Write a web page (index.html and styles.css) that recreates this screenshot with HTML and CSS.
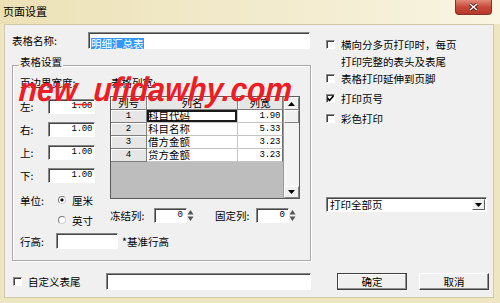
FILE: index.html
```html
<!DOCTYPE html>
<html>
<head>
<meta charset="utf-8">
<link rel="stylesheet" href="styles.css">
</head>
<body>
<div class="window">
  <div class="titlebar">
    <span class="title">页面设置</span>
    <span class="close"><svg width="9" height="8" viewBox="0 0 9 8"><path d="M1 1 L8 7 M8 1 L1 7" stroke="#3a1410" stroke-width="3"/><path d="M1 1 L8 7 M8 1 L1 7" stroke="#fff" stroke-width="1.6"/></svg></span>
  </div>
  <div class="client">
    <div class="main">
      <div class="left">
        <div class="name-row">
          <span class="name-lbl">表格名称:</span>
          <div class="field name-field"><span class="sel">明细汇总表</span></div>
        </div>
        <div class="group">
          <div class="group-title">表格设置</div>
          <div class="group-body">
            <div class="gb-top">
              <div class="margins">
                <div class="cap">页边界宽度:</div>
                <div class="mrow"><span class="mlbl">左:</span><div class="field num">1.00</div></div>
                <div class="mrow"><span class="mlbl">右:</span><div class="field num">1.00</div></div>
                <div class="mrow"><span class="mlbl">上:</span><div class="field num">1.00</div></div>
                <div class="mrow"><span class="mlbl">下:</span><div class="field num">1.00</div></div>
                <div class="unit-row"><span class="ulbl">单位:</span><span class="radio on"></span><span>厘米</span></div>
                <div class="unit-row second"><span class="radio"></span><span>英寸</span></div>
              </div>
              <div class="colarea">
                <div class="cap cap2">表格列宽:</div>
                <div class="grid">
                  <div class="gtable">
                    <div class="hc">列号</div><div class="hc">列名</div><div class="hc">列宽</div>
                    <div class="rc">1</div><div class="dc focus">科目代码</div><div class="dc n">1.90</div>
                    <div class="rc">2</div><div class="dc">科目名称</div><div class="dc n">5.33</div>
                    <div class="rc">3</div><div class="dc">借方金额</div><div class="dc n">3.23</div>
                    <div class="rc">4</div><div class="dc">贷方金额</div><div class="dc n">3.23</div>
                  </div>
                  <div class="gscroll">
                    <div class="sbtn"><svg width="7" height="4" viewBox="0 0 7 4"><path d="M0 4 L3.5 0 L7 4 Z" fill="#000"/></svg></div>
                    <div class="thumb"></div>
                    <div class="track"></div>
                    <div class="sbtn down"><svg width="7" height="4" viewBox="0 0 7 4"><path d="M0 0 L7 0 L3.5 4 Z" fill="#000"/></svg></div>
                  </div>
                </div>
                <div class="spins">
                  <span class="slbl">冻结列:</span>
                  <div class="spin">
                    <div class="field spin-box">0</div>
                    <div class="spin-btn"><svg width="7" height="13" viewBox="0 0 7 13"><path d="M0.5 5.5 L3.5 1 L6.5 5.5 Z M0.5 7.5 L6.5 7.5 L3.5 12 Z" fill="#555"/></svg></div>
                  </div>
                  <span class="slbl2">固定列:</span>
                  <div class="spin">
                    <div class="field spin-box">0</div>
                    <div class="spin-btn"><svg width="7" height="13" viewBox="0 0 7 13"><path d="M0.5 5.5 L3.5 1 L6.5 5.5 Z M0.5 7.5 L6.5 7.5 L3.5 12 Z" fill="#555"/></svg></div>
                  </div>
                </div>
              </div>
            </div>
            <div class="rh-row"><span class="rhlbl">行高:</span><div class="field rh-field"></div><span class="rh-note">*基准行高</span></div>
          </div>
        </div>
      </div>
      <div class="right">
        <div class="chk-item"><span class="chk"></span><span>横向分多页打印时，每页<br>打印完整的表头及表尾</span></div>
        <div class="chk-item"><span class="chk"></span><span>表格打印延伸到页脚</span></div>
        <div class="chk-item gap"><span class="chk"><svg width="7" height="7" viewBox="0 0 7 7"><path d="M0.5 3 L2.5 5.5 L6.5 0.8" stroke="#000" stroke-width="1.6" fill="none"/></svg></span><span>打印页号</span></div>
        <div class="chk-item gap"><span class="chk"></span><span>彩色打印</span></div>
        <div class="field combo"><span class="combo-text">打印全部页</span><span class="combo-btn"><svg width="7" height="4" viewBox="0 0 7 4"><path d="M0 0 L7 0 L3.5 4 Z" fill="#000"/></svg></span></div>
      </div>
    </div>
    <div class="bottom">
      <div class="tail-lbl"><span class="chk"></span><span>自定义表尾</span></div>
      <div class="field tail-field"></div>
      <div class="btn default">确定</div>
      <div class="btn cancel">取消</div>
    </div>
  </div>
  <div class="watermark">new_ufidawhy.com</div>
</div>
</body>
</html>
```

FILE: styles.css
```css
* { box-sizing: border-box; }
html, body { margin: 0; padding: 0; }
body {
  font-family: "Noto Sans CJK SC", "Noto Sans", sans-serif;
  font-size: 10.5px;
  color: #000;
  background: #fff;
}
.window {
  position: relative;
  width: 500px;
  height: 303px;
  background: #eee5c3;
  display: flex;
  flex-direction: column;
  overflow: hidden;
}
.titlebar {
  height: 24px;
  flex: none;
  display: flex;
  align-items: flex-start;
  background: linear-gradient(to right, #ece1b6, #f3ecd0 60%, #f9f5e2);
}
.title { margin: 3px 0 0 3px; line-height: 16px; font-size: 11px; }
.close {
  margin-left: auto;
  margin-right: 8px;
  width: 37px;
  height: 15px;
  border: 1px solid #8a3027;
  border-top: none;
  border-radius: 0 0 4px 4px;
  background: linear-gradient(#e38a78, #c8493a 50%, #b5392b);
  display: flex;
  align-items: center;
  justify-content: center;
}
.client {
  flex: 1;
  margin: 0 6px 5px 4px;
  background: #f0f0f0;
  border: 1px solid #d2c9a6;
}
.main { display: flex; padding: 7px 0 0 7px; }
.left { width: 299px; }
.name-row { display: flex; align-items: center; height: 17px; }
.name-lbl { width: 76px; line-height: 17px; }
.field {
  background: #fff;
  border: 1px solid;
  border-color: #868686 #fff #fff #868686;
  box-shadow: inset 1px 1px 0 #454545;
}
.name-field { width: 222px; height: 17px; padding: 3px 0 0 2px; }
.sel { display: inline-block; background: #3399ff; color: #fff; line-height: 11px; height: 11px; }
.group {
  margin-top: 16px;
  border: 1px solid #a9a9a9;
  box-shadow: inset 1px 1px 0 #fff, 1px 1px 0 #fff;
}
.group-title {
  width: max-content;
  margin: -11px 0 0 6px;
  padding: 0 1px;
  background: #f0f0f0;
  line-height: 14px;
}
.group-body { padding: 0 10px 11px 7px; }
.gb-top { display: flex; }
.margins { width: 90px; flex: none; }
.cap { margin-top: 6px; line-height: 16px; }
.cap2 { padding-left: 1px; }
.mrow { display: flex; align-items: center; height: 15px; margin-top: 8px; }
.mlbl { width: 28px; line-height: 15px; }
.num {
  width: 47px;
  height: 15px;
  font-family: "Liberation Mono", monospace;
  font-size: 9px;
  letter-spacing: -0.3px;
  text-align: right;
  padding-right: 2px;
  line-height: 13px;
}
.unit-row { display: flex; align-items: center; height: 16px; margin-top: 9px; }
.unit-row.second { margin-top: 4px; padding-left: 38px; }
.ulbl { width: 38px; }
.radio {
  width: 8px;
  height: 8px;
  border-radius: 50%;
  border: 1px solid #7a7a7a;
  border-right-color: #d0d0d0;
  border-bottom-color: #d0d0d0;
  background: #fff;
  margin-right: 6px;
  flex: none;
}
.radio.on { background: radial-gradient(circle, #000 0 1.3px, #fff 1.8px); }
.colarea { flex: 1; }
.grid {
  margin-top: 5px;
  height: 103px;
  display: flex;
  border: 1px solid #5c5c5c;
}
.gtable {
  width: 172px;
  background: #bdbdbd;
  display: grid;
  grid-template-columns: 36px 91px 45px;
  grid-auto-rows: 13px;
  align-content: start;
}
.hc, .rc {
  background: #e6e6e6;
  border-right: 1px solid #7e7e7e;
  border-bottom: 1px solid #7e7e7e;
  box-shadow: inset 1px 1px 0 #fff;
  text-align: center;
  line-height: 12px;
}
.rc { font-family: "Liberation Mono", monospace; font-size: 9px; }
.dc {
  background: #fff;
  border-right: 1px solid #c4c4c4;
  border-bottom: 1px solid #c4c4c4;
  line-height: 12px;
  padding-left: 1px;
  white-space: nowrap;
}
.dc.n {
  text-align: right;
  padding-right: 2px;
  font-family: "Liberation Mono", monospace;
  font-size: 9px;
  letter-spacing: -0.3px;
  border-right-color: #6a6a6a;
}
.dc.focus { box-shadow: inset 0 0 0 2px #1a1a1a; }
.gscroll {
  width: 16px;
  display: flex;
  flex-direction: column;
  background: #f4f4f4;
  border-left: 1px solid #9a9a9a;
}
.sbtn, .thumb {
  height: 13px;
  flex: none;
  background: #f0f0f0;
  border: 1px solid;
  border-color: #fff #808080 #808080 #fff;
  display: flex;
  align-items: center;
  justify-content: center;
}
.sbtn.down { height: 12px; }
.track { flex: 1; }
.spins { display: flex; align-items: center; height: 15px; margin-top: 9px; }
.slbl { width: 44px; }
.slbl2 { margin-left: 21px; width: 41px; }
.spin { display: flex; height: 15px; }
.spin-box {
  width: 33px;
  height: 15px;
  text-align: right;
  padding-right: 3px;
  font-family: "Liberation Mono", monospace;
  font-size: 9px;
  line-height: 13px;
}
.spin-btn { width: 7px; height: 15px; display: flex; align-items: center; justify-content: center; }
.rh-row { display: flex; align-items: center; height: 16px; margin-top: 5px; }
.rhlbl { width: 36px; }
.rh-field { width: 62px; height: 16px; }
.rh-note { margin-left: 4px; }
.right { margin-left: 14px; width: 162px; padding-top: 4px; }
.chk-item { display: flex; align-items: flex-start; line-height: 17px; }
.chk-item.gap { margin-top: 3px; }
.chk {
  width: 9px;
  height: 9px;
  flex: none;
  margin: 4px 6px 0 1px;
  background: #fff;
  border: 1px solid;
  border-color: #8a8a8a #fff #fff #8a8a8a;
  box-shadow: inset 1px 1px 0 #404040;
  display: flex;
  align-items: center;
  justify-content: center;
}
.combo {
  margin-top: 70px;
  margin-left: 1px;
  width: 161px;
  height: 15px;
  display: flex;
  align-items: center;
  padding-left: 3px;
}
.combo-text { flex: 1; line-height: 13px; }
.combo-btn {
  width: 13px;
  height: 11px;
  margin-right: 1px;
  background: #f0f0f0;
  border: 1px solid;
  border-color: #fff #606060 #606060 #fff;
  display: flex;
  align-items: center;
  justify-content: center;
}
.bottom { display: flex; align-items: center; height: 17px; margin-top: 12px; padding-left: 8px; }
.tail-lbl { width: 93px; display: flex; align-items: center; }
.tail-lbl .chk { margin: 0 6px 0 0; }
.tail-field { width: 205px; height: 17px; }
.btn {
  width: 70px;
  height: 17px;
  background: #f0f0f0;
  border: 1px solid;
  border-color: #fff #404040 #404040 #fff;
  box-shadow: inset -1px -1px 0 #909090;
  text-align: center;
  line-height: 15px;
}
.btn.default { margin-left: 26px; border-color: #404040; box-shadow: inset -1px -1px 0 #909090, inset 1px 1px 0 #fff; }
.btn.cancel { margin-left: 12px; }
.watermark {
  position: absolute;
  left: 20px;
  top: 72px;
  font-family: "Liberation Sans", Arial, sans-serif;
  font-style: italic;
  font-weight: 700;
  font-size: 34px;
  line-height: 34px;
  color: #ee1c25;
  white-space: nowrap;
  pointer-events: none;
  transform: scaleX(0.88) skewX(-4deg);
  transform-origin: 0 0;
}
```
